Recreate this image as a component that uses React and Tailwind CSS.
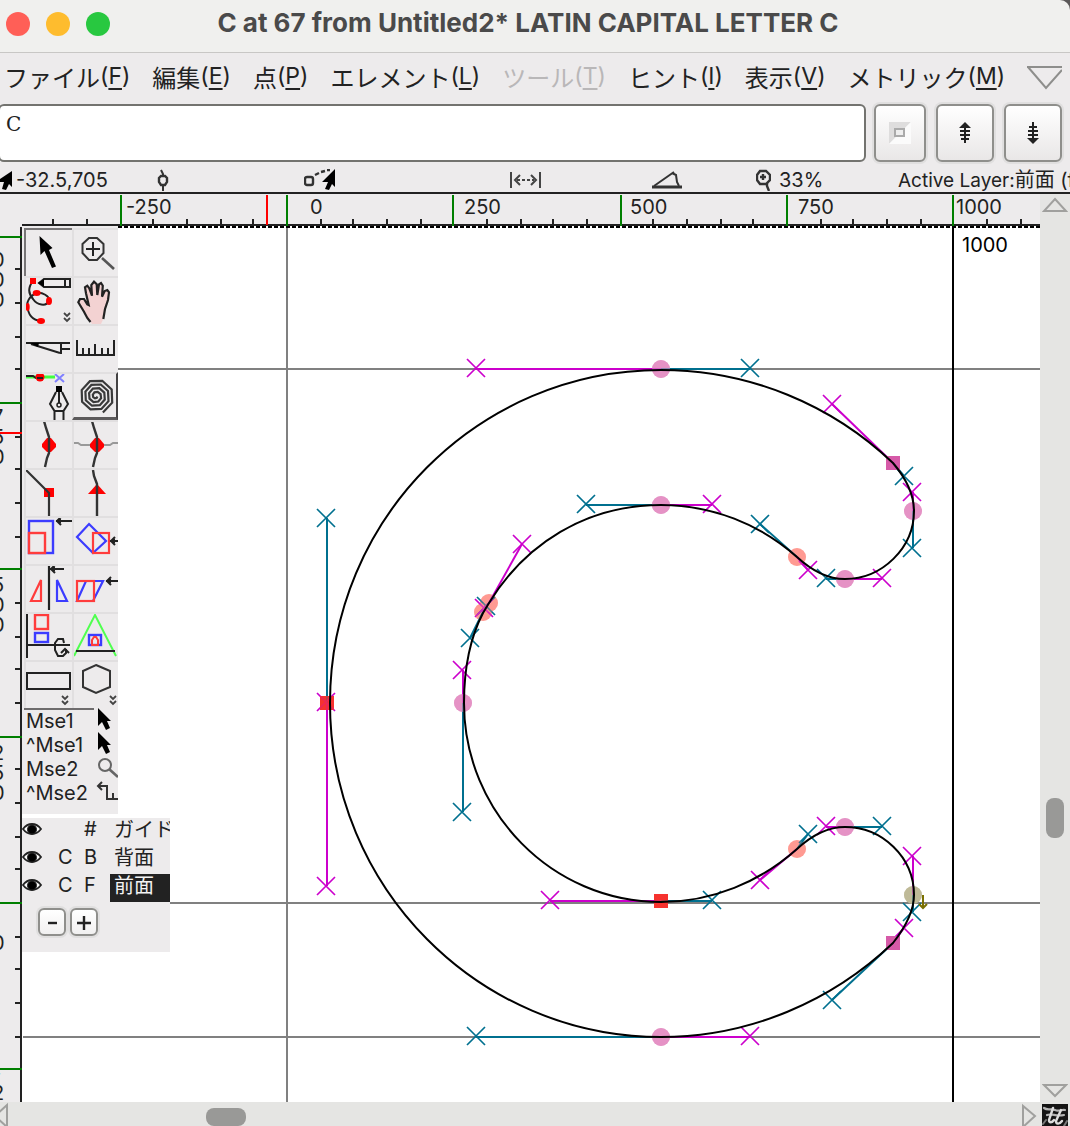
import { clsx } from "clsx";

const TEAL = "#00708f";
const MAGENTA = "#cc00cc";
const INK = "#222222";
const BLUE = "#3c3cff";
const RED = "#ff3c3c";

const menus = [
  { label: "ファイル", mnemonic: "F" },
  { label: "編集", mnemonic: "E" },
  { label: "点", mnemonic: "P" },
  { label: "エレメント", mnemonic: "L" },
  { label: "ツール", mnemonic: "T", disabled: true },
  { label: "ヒント", mnemonic: "I" },
  { label: "表示", mnemonic: "V" },
  { label: "メトリック", mnemonic: "M" },
];

const rulerX = {
  major: [121, 287, 453, 621, 787, 953],
  minor: [53, 87, 153, 187, 221, 253, 321, 353, 387, 421, 487, 521, 553, 587, 653, 687, 721, 753, 821, 853, 887, 921, 987, 1021],
  labels: [[126, "-250"], [310, "0"], [464, "250"], [630, "500"], [798, "750"], [956, "1000"]],
};

const rulerY = {
  major: [11, 177, 343, 511, 677, 843],
  minor: [43, 77, 111, 143, 211, 243, 277, 311, 377, 411, 443, 477, 543, 577, 611, 643, 711, 743, 777, 811],
  labels: [[21, "1000"], [198, "750"], [366, "500"], [534, "250"], [724, "0"], [854, "-25"]],
};

// control handles: x, y of the on-curve point, x, y of the handle
const prevHandles = [
  [661, 369, 476, 368], [893, 463, 832, 404], [913, 511, 912, 492], [845, 579, 882, 578],
  [797, 557, 808, 570], [661, 505, 712, 504], [489, 603, 522, 544], [483, 612, 484, 608],
  [463, 703, 462, 670], [661, 901, 550, 900], [797, 849, 760, 880], [845, 827, 826, 826],
  [913, 895, 912, 856], [893, 943, 904, 928], [661, 1037, 750, 1036], [327, 703, 326, 886],
  [327, 703, 326, 702],
];

const nextHandles = [
  [661, 369, 750, 368], [893, 463, 904, 476], [913, 511, 912, 548], [845, 579, 826, 578],
  [797, 557, 760, 524], [661, 505, 586, 504], [489, 603, 486, 606], [483, 612, 470, 638],
  [463, 703, 462, 812], [661, 901, 712, 900], [797, 849, 808, 834], [845, 827, 882, 826],
  [913, 895, 912, 912], [893, 943, 832, 1000], [661, 1037, 476, 1036], [327, 703, 326, 518],
];

const points = [
  { x: 661, y: 369, kind: "extremum" },
  { x: 913, y: 511, kind: "extremum" },
  { x: 845, y: 579, kind: "extremum" },
  { x: 661, y: 505, kind: "extremum" },
  { x: 463, y: 703, kind: "extremum" },
  { x: 845, y: 827, kind: "extremum" },
  { x: 661, y: 1037, kind: "extremum" },
  { x: 797, y: 557, kind: "curve" },
  { x: 489, y: 603, kind: "curve" },
  { x: 483, y: 612, kind: "curve" },
  { x: 797, y: 849, kind: "curve" },
  { x: 913, y: 895, kind: "first" },
  { x: 893, y: 463, kind: "corner" },
  { x: 893, y: 943, kind: "corner" },
  { x: 661, y: 901, kind: "cornerRed" },
  { x: 327, y: 703, kind: "cornerRed" },
];

const pointFill = {
  extremum: "#e592c5",
  curve: "#ff9a93",
  first: "#bfba98",
  corner: "#d65aa8",
  cornerRed: "#f5332f",
};

// how much of a handle the point hides where they cross
const pointCover = {
  extremum: 0.6,
  curve: 0.2,
  first: 0.6,
  corner: 0.85,
  cornerRed: 0.75,
};

const outline =
  "M661 370 C750 370 832 405 893 463 C904 476 914 492 914 511 C914 548 882 579 845 579 " +
  "C826 579 811 570 797 557 C760 524 712 505 661 505 C586 505 525 544 489 603 L483 613 " +
  "C470 638 464 670 464 703 C464 812 552 902 661 902 C712 902 760 882 797 849 " +
  "C811 836 826 827 845 827 C882 827 914 857 914 895 C914 913 904 929 893 943 " +
  "C832 1001 750 1037 661 1037 C478 1037 330 887 330 703 C330 519 478 370 661 370 Z";

function octagonSpiral(cx, cy) {
  const pts = [];
  for (let i = 0; i <= 33; i++) {
    const a = (i * Math.PI) / 4 + Math.PI / 8;
    const r = 1.5 + i * 0.5;
    pts.push(`${(cx + r * Math.cos(a)).toFixed(1)},${(cy + r * Math.sin(a)).toFixed(1)}`);
  }
  return pts.join(" ");
}

function LeftArrow({ x1, x2, y }) {
  return (
    <g stroke={INK} strokeWidth="2" fill="none">
      <path d={`M${x1} ${y}H${x2}`} />
      <path d={`M${x1 + 5} ${y - 4}L${x1 + 1} ${y}L${x1 + 5} ${y + 4}`} />
      <path d={`M${x1 + 4} ${y - 2}V${y + 2}`} />
    </g>
  );
}

function More({ x, y }) {
  return (
    <path
      d={`M${x} ${y}l3 3l3 -3M${x} ${y + 5}l3 3l3 -3`}
      stroke="#444"
      strokeWidth="1.8"
      fill="none"
    />
  );
}

const handOutline =
  "M18.5 46L15.3 42L12 35.7L6.3 26.3L8 23H12L15.3 28.3L16.7 29L14 17.3L13 11.3L15.3 9.7L17.3 12.3L20 19.7L19.3 9L22 5.7L24.7 8.3L25.3 19L27 8.3L29 7L30.8 9.7L30 20.7L32.7 15L35.3 14L37 16.3L36 24L33 33L31.3 43";

const tools = [
  {
    name: "Pointer",
    state: "current",
    art: <polygon points="15.5,8 16.5,27 20.5,23 28,40 32,38.5 25,22 28.5,20" fill="#000" />,
  },
  {
    name: "Magnify",
    art: (
      <g stroke="#333" strokeWidth="2" fill="none">
        <polygon points="17,10 25,10 31.5,16 31.5,25 25,32 17,32 10.5,25 10.5,16" />
        <path d="M14 21h14M21 14v14" stroke={INK} />
        <path d="M30 30L42 41" stroke="#555" strokeWidth="2.6" />
      </g>
    ),
  },
  {
    name: "Freehand",
    art: (
      <g fill="none" stroke={INK} strokeWidth="2">
        <path d="M8.7 5C4 12 4 17 9 23C13 29 22 31 25 25C26 20 18 16 12.7 17C5 20 2 27 3.7 31C4 38 8 44 17 45" />
        <path d="M20 3H46V11H20L15 7Z M41 3V11" />
        <path d="M14 7L20 3V11Z" fill="#000" stroke="none" />
        <g fill="#f00" stroke="none">
          <rect x="6" y="2" width="6" height="6" />
          <ellipse cx="12.7" cy="17" rx="4" ry="3" />
          <ellipse cx="25" cy="25" rx="3" ry="4" />
          <ellipse cx="3.7" cy="31" rx="2" ry="4" />
          <ellipse cx="17" cy="45" rx="4" ry="3" />
        </g>
        <More x={40} y={37} />
      </g>
    ),
  },
  {
    name: "Scroll by hand",
    art: (
      <>
        <path d={`${handOutline}L29 48H20Z`} fill="#f3d2d2" />
        <path d={handOutline} fill="none" stroke="#222" strokeWidth="2.2" />
      </>
    ),
  },
  {
    name: "Knife",
    art: (
      <g stroke={INK} strokeWidth="2" fill="none">
        <path d="M2 19H46M7 20L36 29M37 19V30M37 25H46" />
        <path d="M6 19L14 23L15 19Z" fill="#000" stroke="none" />
      </g>
    ),
  },
  {
    name: "Measure",
    art: <path d="M5 16V31H42V16M11 31V24M17 31V24M23 31V20M30 31V24M36 31V24" fill="none" stroke={INK} strokeWidth="2" />,
  },
  {
    name: "Pen",
    art: (
      <g fill="none" strokeWidth="2" stroke={INK}>
        <path d="M2 5H31" stroke="#40ff40" strokeWidth="3" />
        <path d="M2 4L9 4L12 6H20" />
        <circle cx="16" cy="5" r="4.5" fill="#f00" stroke="none" />
        <path d="M13 6H19" />
        <path d="M31 2L40 10M40 2L31 10" stroke="#8080ff" />
        <path d="M32 20L26 32L30.5 39H39.5L44 32L38 20M30.5 39V48M39.5 39V48M35 19V31" />
        <rect x="32" y="14" width="6" height="6" fill="#000" stroke="none" />
        <circle cx="35" cy="33" r="2" strokeWidth="1.5" />
      </g>
    ),
  },
  {
    name: "Spiro",
    state: "pressed",
    art: <polyline points={octagonSpiral(24, 24)} fill="none" stroke="#3a3a3a" strokeWidth="2.2" />,
  },
  {
    name: "Curve point",
    art: (
      <g>
        <polygon points="23,18 27,18 32,24 32,27 27,32 23,32 18,27 18,24" fill="#f00" />
        <path d="M20 1L22 8L25 17V33L23 38L21 47" fill="none" stroke="#333" strokeWidth="2.4" />
      </g>
    ),
  },
  {
    name: "HVCurve point",
    art: (
      <g>
        <path d="M1 23H6L9 25H38L41 23H46" fill="none" stroke="#999" strokeWidth="2" />
        <polygon points="23,18 27,18 32,24 32,27 27,32 23,32 18,27 18,24" fill="#f00" />
        <path d="M20 1L22 8L25 17V33L23 38L21 47" fill="none" stroke="#333" strokeWidth="2.4" />
      </g>
    ),
  },
  {
    name: "Corner point",
    art: (
      <g>
        <rect x="20" y="20" width="10" height="9" fill="#f00" />
        <path d="M2 2L25 25V48" fill="none" stroke="#333" strokeWidth="2.2" />
      </g>
    ),
  },
  {
    name: "Tangent point",
    art: (
      <g>
        <polygon points="25,16 34,26 16,26" fill="#f00" />
        <path d="M21 2L22 8L25 16V48" fill="none" stroke="#333" strokeWidth="2.4" />
      </g>
    ),
  },
  {
    name: "Scale",
    art: (
      <g fill="none" strokeWidth="2.4">
        <rect x="5" y="5" width="24" height="32" stroke={BLUE} />
        <rect x="5" y="17" width="16" height="20" stroke={RED} fill="#edebec" />
        <LeftArrow x1={32} x2={48} y={5} />
      </g>
    ),
  },
  {
    name: "Rotate",
    art: (
      <g fill="none" strokeWidth="2.2">
        <path d="M17 8L34 25L21 37L5 21Z" stroke={BLUE} />
        <rect x="21" y="17" width="16" height="20" stroke={RED} />
        <LeftArrow x1={38} x2={48} y={25} />
      </g>
    ),
  },
  {
    name: "Flip",
    art: (
      <g fill="none" strokeWidth="2.2">
        <path d="M17 16V37H7Z" stroke={RED} />
        <path d="M33 16V37H43Z" stroke={BLUE} />
        <path d="M25 2V46" stroke={INK} />
        <LeftArrow x1={26} x2={40} y={5} />
      </g>
    ),
  },
  {
    name: "Skew",
    art: (
      <g fill="none" strokeWidth="2.2">
        <path d="M14 17H31L21 37H5Z" stroke={BLUE} />
        <rect x="5" y="17" width="17" height="20" stroke={RED} />
        <LeftArrow x1={34} x2={48} y={17} />
      </g>
    ),
  },
  {
    name: "Rotate in 3D",
    art: (
      <g fill="none" strokeWidth="2" stroke={INK}>
        <path d="M3 2V46M3 33H46" />
        <rect x="11" y="3" width="13" height="14" stroke={RED} strokeWidth="2.4" />
        <rect x="11" y="21" width="13" height="9" stroke={BLUE} strokeWidth="2.4" />
        <path d="M40 31L39 27H34L31 31V38L34 44H39L42 41V37M37 41L41 37L45 41" />
      </g>
    ),
  },
  {
    name: "Perspective",
    art: (
      <g fill="none" strokeWidth="2">
        <path d="M2 44L23 3L44 44" stroke="#50ff50" />
        <path d="M4 39H43" stroke={INK} />
        <rect x="17" y="23" width="12" height="10" stroke={BLUE} strokeWidth="2.4" />
        <path d="M20 33V28L22 25H24L26 28V33Z" stroke={RED} />
      </g>
    ),
  },
  {
    name: "Rectangle",
    art: (
      <>
        <rect x="3" y="13" width="43" height="16" fill="none" stroke={INK} strokeWidth="2" />
        <More x={38} y={36} />
      </>
    ),
  },
  {
    name: "Polygon",
    art: (
      <>
        <polygon points="24,5 38,11 38,27 24,33 11,27 11,11" fill="none" stroke="#333" strokeWidth="2" />
        <More x={38} y={36} />
      </>
    ),
  },
];

const miniPointer = <polygon points="2,0 2,18 6,14 10,22 14,20 11,13 15,13" fill="#000" />;

const mouseButtons = [
  { label: "Mse1", art: miniPointer },
  { label: "^Mse1", art: miniPointer },
  {
    label: "Mse2",
    art: (
      <g fill="none" stroke="#666" strokeWidth="2">
        <circle cx="9" cy="9" r="6" />
        <path d="M13 13L22 21" strokeWidth="2.6" />
      </g>
    ),
  },
  {
    label: "^Mse2",
    art: <path d="M2 6H11V19H22M6 2L2 6L6 10M17 19V13" fill="none" stroke="#333" strokeWidth="2" />,
  },
];

const layers = [
  { quad: "", mark: "#", name: "ガイド" },
  { quad: "C", mark: "B", name: "背面" },
  { quad: "C", mark: "F", name: "前面", active: true },
];

function TitleBar() {
  return (
    <div className="bg-[#5b5858]">
      <header className="relative flex h-[53px] items-center justify-center rounded-tr-[10px] border-b border-[#c8c7c5] bg-[#f0f0ee]">
        <div className="absolute left-1.5 top-3 flex gap-4">
          <button aria-label="Close" className="size-6 rounded-full bg-[#ff5f57]" />
          <button aria-label="Minimize" className="size-6 rounded-full bg-[#febc2e]" />
          <button aria-label="Zoom" className="size-6 rounded-full bg-[#28c840]" />
        </div>
        <h1 className="whitespace-nowrap pb-1.5 pr-3.5 text-[26px] font-bold leading-8 text-[#4a4a4a]">
          C at 67 from Untitled2* LATIN CAPITAL LETTER C
        </h1>
      </header>
    </div>
  );
}

function MenuBar() {
  return (
    <nav className="flex h-[51px] items-center gap-[22px] overflow-hidden pl-1">
      {menus.map((m) => (
        <button
          key={m.mnemonic}
          disabled={m.disabled}
          className={clsx("shrink-0 whitespace-nowrap text-2xl leading-8", m.disabled && "text-[#b9b7b8]")}
        >
          {m.label}
          <span className="align-[3px] text-[23px] leading-6">
            (<span className="underline decoration-2 underline-offset-4">{m.mnemonic}</span>)
          </span>
        </button>
      ))}
      <button aria-label="More menus" className="shrink-0">
        <svg width="35" height="26" fill="none" stroke="#8e8e8c" strokeWidth="2">
          <path d="M0 1H35M1 1L19 22L35 4" />
        </svg>
      </button>
    </nav>
  );
}

const entryButton =
  "flex h-[58px] shrink-0 items-center justify-center rounded-md border-2 border-[#8f8f8c] bg-linear-to-b from-white to-[#e9e7e7] ring-2 ring-[#e0dfdf]";

function WordEntry() {
  return (
    <div className="flex items-start gap-2 pr-2">
      <textarea
        aria-label="Word list"
        defaultValue="C"
        className="-ml-0.5 h-[58px] min-w-0 flex-1 resize-none overflow-hidden rounded-md border-2 border-[#73736f] bg-white px-1.5 py-1 font-['DejaVu_Serif',serif] text-xl leading-7 outline-none"
      />
      <div className="flex gap-2.5">
        <button aria-label="Insert" className={clsx(entryButton, "w-[52px]")}>
          <svg width="22" height="22">
            <path d="M0 0H22L0 22Z" fill="#dedddd" />
            <path d="M22 0V22H0Z" fill="#fbfbfb" />
            <rect x="6" y="7" width="9" height="7" fill="#eee" stroke="#aaa" strokeWidth="2" />
          </svg>
        </button>
        <button aria-label="Previous word" className={clsx(entryButton, "w-[58px]")}>
          <svg width="12" height="22" stroke={INK} strokeWidth="2">
            <path d="M6 4V21M1 9H11M1 13H11M2 17H10" />
            <path d="M6 0L12 6H0Z" fill={INK} stroke="none" />
          </svg>
        </button>
        <button aria-label="Next word" className={clsx(entryButton, "w-[58px]")}>
          <svg width="12" height="22" stroke={INK} strokeWidth="2">
            <path d="M6 0V18M2 5H10M1 9H11M1 13H11" />
            <path d="M6 22L12 16H0Z" fill={INK} stroke="none" />
          </svg>
        </button>
      </div>
    </div>
  );
}

function InfoBar() {
  return (
    <div className="grid h-8 grid-cols-[155px_149px_206px_142px_104px_142px_1fr] items-center overflow-hidden whitespace-nowrap border-b-2 border-[#222] pt-1.5 text-xl leading-6">
      <div className="flex items-center gap-1">
        <svg width="12" height="22">
          <path d="M12 2V18L9 15L6 21L2 20L4 13H0V10Z" fill="#000" />
        </svg>
        -32.5,705
      </div>
      <svg width="16" height="22" fill="none" stroke="#333" strokeWidth="2">
        <path d="M6 1L8 5V7M8 16V22" />
        <path d="M6 7H10L12 9V13L10 16H6L4 13V9Z" strokeWidth="2.4" />
      </svg>
      <svg width="32" height="22" fill="none" stroke="#333" strokeWidth="2.4">
        <rect x="1" y="8" width="8" height="8" rx="2" />
        <path d="M11 6L15 4M17 3L21 2M23 1H26" />
        <path d="M31 0V18L28 15L25 21L21 20L24 13H18Z" fill="#000" stroke="none" />
      </svg>
      <svg width="31" height="22" fill="none" stroke="#444" strokeWidth="2">
        <path d="M1 3V19M30 3V19M10 6L5 11L10 16M21 6L26 11L21 16" />
        <path d="M7 11H24" strokeDasharray="3 2" />
      </svg>
      <svg width="30" height="22" fill="none" stroke="#333" strokeWidth="2">
        <path d="M0 18H30" strokeWidth="3" />
        <path d="M2 17L22 3M20 4L24 6L25 13L27 17" />
      </svg>
      <div className="flex items-center gap-2">
        <svg width="15" height="22" fill="none" stroke="#333" strokeWidth="2.4">
          <path d="M4 2H10L14 6V11L10 15H4L1 11V6Z" />
          <path d="M4 8H10M7 5V11M11 14V17L13 22" />
        </svg>
        33%
      </div>
      <div className="min-w-0 overflow-hidden text-[19px]">
        Active Layer:<span className="text-xl leading-6">前面 (foreground)</span>
      </div>
    </div>
  );
}

function TopRuler() {
  return (
    <svg className="block h-8 w-full shrink-0" aria-label="Horizontal ruler">
      <path d="M22 31H2000" stroke={INK} strokeWidth="2" />
      {rulerX.minor.map((x) => (
        <path key={x} d={`M${x} 25V30`} stroke={INK} strokeWidth="2" />
      ))}
      {rulerX.major.map((x) => (
        <path key={x} d={`M${x} 1V32`} stroke="#008000" strokeWidth="2" />
      ))}
      <path d="M267 1V31" stroke="#f00" strokeWidth="2" />
      {rulerX.labels.map(([x, text]) => (
        <text key={text} x={x} y="20" fontSize="20" fill={INK}>
          {text}
        </text>
      ))}
    </svg>
  );
}

function SideRuler() {
  return (
    <div className="relative w-[22px] shrink-0">
      <svg className="absolute inset-0 h-full w-full" aria-label="Vertical ruler">
        <path d="M21 1V2000" stroke={INK} strokeWidth="2" />
        {rulerY.minor.map((y) => (
          <path key={y} d={`M15 ${y}H20`} stroke={INK} strokeWidth="2" />
        ))}
        {rulerY.major.map((y) => (
          <path key={y} d={`M0 ${y}H22`} stroke="#008000" strokeWidth="2" />
        ))}
        <path d="M0 207H22" stroke="#f00" strokeWidth="2" />
        {rulerY.labels.map(([y, text]) => (
          <text key={text} fontSize="20" fill={INK}>
            {text.split("").map((ch, i) => (
              <tspan key={i} x="-8" y={y + i * 20}>
                {ch}
              </tspan>
            ))}
          </text>
        ))}
      </svg>
    </div>
  );
}

function Handle({ at, color }) {
  const [px, py, x, y] = at;
  return (
    <g stroke={color} fill="none">
      <path d={`M${px} ${py}L${px === x + 1 ? px : x} ${py === y + 1 ? py : y}`} strokeWidth="2" />
      <path d={`M${x - 9} ${y - 9}L${x + 9} ${y + 9}M${x - 9} ${y + 9}L${x + 9} ${y - 9}`} strokeWidth="1.7" />
    </g>
  );
}

function Point({ p, opacity }) {
  if (p.kind.startsWith("corner")) {
    return <rect x={p.x - 7} y={p.y - 7} width="14" height="14" fill={pointFill[p.kind]} fillOpacity={opacity} />;
  }
  return <circle cx={p.x} cy={p.y} r="9" fill={pointFill[p.kind]} fillOpacity={opacity} />;
}

// drawn in window coordinates, shifted back by the ruler and toolbar sizes
function Glyph() {
  return (
    <svg className="absolute inset-0 h-full w-full" aria-label="Glyph outline">
      <g transform="translate(-22 -226)">
        <path d="M22 227H2000" stroke="#000" strokeWidth="2" strokeDasharray="4 2" />
        <path d="M23 369H2000M23 903H2000M23 1037H2000M287 228V2000" stroke="#808080" strokeWidth="2" />
        <path d="M953 226V2000" stroke="#000" strokeWidth="2" />
        <text x="962" y="252" fontSize="20" fill="#000">
          1000
        </text>
        {points.map((p, i) => (
          <Point key={i} p={p} opacity={1} />
        ))}
        {nextHandles.map((h, i) => (
          <Handle key={i} at={h} color={TEAL} />
        ))}
        {prevHandles.map((h, i) => (
          <Handle key={i} at={h} color={MAGENTA} />
        ))}
        {points.map((p, i) => (
          <Point key={i} p={p} opacity={pointCover[p.kind]} />
        ))}
        <path d={outline} fill="none" stroke="#000" strokeWidth="2" />
        <path d="M923 895V908M919 904L923 908L927 904" fill="none" stroke="#7a7000" strokeWidth="2" />
      </g>
    </svg>
  );
}

function ToolPalette() {
  return (
    <aside className="absolute left-0 top-0 h-[588px] w-24 overflow-hidden bg-[#edebec] pl-0.5 pt-0.5">
      <div className="grid grid-cols-[48px_46px]">
        {tools.map((t) => (
          <button
            key={t.name}
            aria-label={t.name}
            className={clsx(
              "h-12 overflow-hidden border-l-2 border-t-2",
              t.state === "current" ? "border-[#777576]" : "border-[#e1dfe0]",
              t.state === "pressed" && "border-b-[3px] border-r-2 border-b-[#5c5a5b] border-r-[#444243]"
            )}
          >
            <svg width="46" height="46" viewBox="2 2 46 46" className="max-w-none">
              {t.art}
            </svg>
          </button>
        ))}
      </div>
      <div className="w-[70px] border-t-2 border-[#6e6c6d]" />
      <ul>
        {mouseButtons.map((b) => (
          <li key={b.label} className="flex h-6 items-start justify-between pl-0.5 text-xl leading-[22px]">
            {b.label}
            <svg width="22" height="22" className="-ml-4 -mt-0.5 shrink-0">
              {b.art}
            </svg>
          </li>
        ))}
      </ul>
    </aside>
  );
}

function Eye() {
  return (
    <svg width="20" height="22" viewBox="0 -3 20 22" fill="none" stroke={INK}>
      <path d="M1 8C4 4 7 3 10 3S16 4 19 8C16 12 13 13 10 13S4 12 1 8Z" strokeWidth="1.8" fill="#f8f8f8" />
      <circle cx="10" cy="8.5" r="4.5" fill="#000" />
    </svg>
  );
}

const smallButton =
  "flex size-7 items-center justify-center rounded-md border-2 border-[#8f8f8c] bg-linear-to-b from-white to-[#f1f0f0] ring-2 ring-[#e0dfdf]";

function LayerPalette() {
  return (
    <aside className="absolute left-0 top-[592px] h-[134px] w-[148px] overflow-hidden bg-[#edebec]">
      {layers.map((l) => (
        <div key={l.name} className="grid h-7 grid-cols-[36px_26px_26px_60px] items-start whitespace-nowrap text-xl leading-[22px]">
          <button aria-label={`Toggle ${l.name}`}>
            <Eye />
          </button>
          <span>{l.quad}</span>
          <span>{l.mark}</span>
          <span className={clsx("h-7 overflow-hidden pl-1 leading-6", l.active && "bg-[#222] text-[#f3f3f3]")}>{l.name}</span>
        </div>
      ))}
      <div className="flex gap-1 pl-4 pt-1.5">
        <button aria-label="Delete layer" className={smallButton}>
          <svg width="18" height="18" stroke={INK} strokeWidth="2.4">
            <path d="M5 10H14" />
          </svg>
        </button>
        <button aria-label="Add layer" className={smallButton}>
          <svg width="18" height="18" stroke={INK} strokeWidth="2.4">
            <path d="M2 10H16M9 3V17" />
          </svg>
        </button>
      </div>
    </aside>
  );
}

function VerticalScroll() {
  return (
    <div className="relative flex w-[30px] shrink-0 flex-col items-center justify-between bg-[#e5e5e3]">
      <button aria-label="Scroll up">
        <svg width="26" height="20" fill="none" stroke="#a0a09e" strokeWidth="2">
          <path d="M13 5L24 17H2Z" />
        </svg>
      </button>
      <div className="absolute left-1.5 top-[604px] h-10 w-[18px] rounded-lg bg-[#999997]" />
      <button aria-label="Scroll down">
        <svg width="26" height="20" fill="none" stroke="#a0a09e" strokeWidth="2">
          <path d="M2 3H24L13 14Z" />
        </svg>
      </button>
    </div>
  );
}

function HorizontalScroll() {
  return (
    <div className="flex h-6 shrink-0 overflow-hidden bg-[#e5e5e3]">
      <div className="relative flex flex-1 items-start justify-between">
        <button aria-label="Scroll left">
          <svg width="10" height="24" fill="none" stroke="#a0a09e" strokeWidth="2">
            <path d="M7 3V25L-5 14Z" />
          </svg>
        </button>
        <div className="absolute left-[206px] top-1.5 h-[18px] w-10 rounded-lg bg-[#999997]" />
        <button aria-label="Scroll right">
          <svg width="20" height="24" fill="none" stroke="#a0a09e" strokeWidth="2">
            <path d="M3 4V25L15 14Z" />
          </svg>
        </button>
      </div>
      <div className="w-[30px] pl-0.5 pt-0.5">
        <svg width="26" height="22" className="bg-[#141414]" fill="none" strokeLinecap="round">
          <path d="M2 4C6 7 9 4 13 6C17 8 20 5 23 6M5 11C10 9 14 13 22 11" stroke="#b4b4b4" strokeWidth="2.2" />
          <path d="M11 4L7 16C7 19 10 19 12 16M19 6L14 17C14 20 17 21 20 17" stroke="#dcdcdc" strokeWidth="2.4" />
          <path d="M1 20L4 16M22 22L25 17" stroke="#777" strokeWidth="2" />
        </svg>
      </div>
    </div>
  );
}

export default function App() {
  return (
    <div className="flex h-screen flex-col overflow-hidden bg-[#edebec] font-[Inter,'Noto_Sans_CJK_JP',sans-serif] text-[#222]">
      <TitleBar />
      <MenuBar />
      <WordEntry />
      <InfoBar />
      <div className="flex min-h-0 flex-1">
        <div className="flex min-w-0 flex-1 flex-col">
          <TopRuler />
          <div className="flex min-h-0 flex-1">
            <SideRuler />
            <main className="relative min-w-0 flex-1 overflow-hidden bg-white">
              <Glyph />
              <ToolPalette />
              <LayerPalette />
            </main>
          </div>
        </div>
        <VerticalScroll />
      </div>
      <HorizontalScroll />
    </div>
  );
}
